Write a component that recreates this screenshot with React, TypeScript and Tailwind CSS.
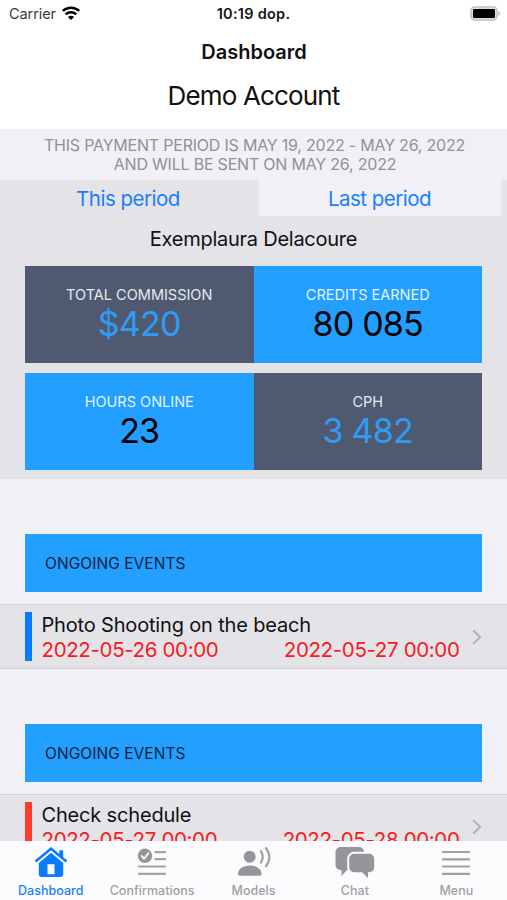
import type { ReactNode } from "react";

function StatusBar() {
  return (
    <div className="grid h-7 grid-cols-3 items-center pr-[6px] pl-[9px]">
      <div className="flex items-center gap-[6px]">
        <span className="text-[14.5px] leading-7 tracking-[-0.08px] text-[#3a3a3a]">Carrier</span>
        <svg width="18" height="14" viewBox="0 0 18 14" className="-mt-[3px]" fill="none" stroke="#000" strokeWidth="2.4">
          <path d="M.8 5C5.3.7 12.7.7 17.2 5" />
          <path d="M3.7 8.3c3-2.7 7.6-2.7 10.6 0" />
          <path d="M9 14 5.9 10.9c1.7-1.5 4.5-1.5 6.2 0z" fill="#000" stroke="none" />
        </svg>
      </div>
      <span className="-ml-[3px] text-center text-[14.5px] leading-7 font-semibold tracking-[0.28px] whitespace-nowrap text-[#151515]">10:19 dop.</span>
      <svg width="31" height="15" viewBox="0 0 31 15" className="-mt-[2px] justify-self-end">
        <rect x="0.9" y="0.9" width="26.2" height="13.2" rx="4" fill="#dcdcdc" stroke="#bdbdbd" strokeWidth="1.3" />
        <rect x="3" y="3" width="22" height="9" rx="1.2" fill="#000" />
        <path d="M28.5 5.2c2.2.8 2.2 3.8 0 4.6z" fill="#b9b9b9" />
      </svg>
    </div>
  );
}

function Tile({ label, value, dark = false }: { label: string; value: string; dark?: boolean }) {
  return (
    <div className={`flex flex-1 flex-col items-center pt-[19px] ${dark ? "bg-[#4f5a71]" : "bg-[#239fff]"}`}>
      <span className={`text-[14.5px] leading-5 ${dark ? "text-[#e6e9ee]" : "text-[#e2f4ff]"}`}>{label}</span>
      <span className={`-mt-px text-[34px] leading-10 tracking-[-0.8px] ${dark ? "text-[#2f9cf4]" : "text-black"}`}>{value}</span>
    </div>
  );
}

function EventGroup({ title, from, to, stripe }: { title: string; from: string; to: string; stripe: string }) {
  return (
    <section>
      <h2 className="mx-[25px] flex h-[58px] items-center bg-[#239fff] pt-px pl-5 text-[15.5px] tracking-[0.06px] text-[#08233c]">
        ONGOING EVENTS
      </h2>
      <div className="mt-3 flex h-[65px] items-center border-y border-[#d2d1d6] bg-[#e4e3e8] pr-6 pl-[25px]">
        <div className={`h-[49px] w-[7px] ${stripe}`} />
        <div className="ml-[9.5px] w-[418px] pt-px">
          <div className="text-[20px] leading-[25px] tracking-[-0.17px] whitespace-nowrap text-[#111113]">{title}</div>
          <div className="flex justify-between text-[20.5px] leading-[23px] tracking-[-0.36px] whitespace-nowrap text-[#f51c20]">
            <span>{from}</span>
            <span>{to}</span>
          </div>
        </div>
        <svg width="10" height="16" viewBox="0 0 10 16" className="ml-3 shrink-0" fill="none" stroke="#b5b4b9" strokeWidth="2.2">
          <path d="m1.2 1.2 6.8 6.8-6.8 6.8" />
        </svg>
      </div>
    </section>
  );
}

function HomeIcon() {
  return (
    <svg width="34" height="30" viewBox="0 0 34 30" fill="#087bff">
      <path d="M1.5 14.5 17 1.7l15.5 12.8" fill="none" stroke="#087bff" strokeWidth="2.5" />
      <path d="M25.3 3.3h3.8v8.5l-3.8-3.2z" />
      <path fillRule="evenodd" d="M17 5.7 29.2 16v11a3 3 0 0 1-3 3H7.8a3 3 0 0 1-3-3V16zM13.5 17.2v10h7v-10z" />
    </svg>
  );
}

function ChecklistIcon() {
  return (
    <svg width="30" height="30" viewBox="0 0 30 30" fill="none" strokeLinecap="round">
      <circle cx="8" cy="8.8" r="7.2" fill="#969599" />
      <path d="m4.7 9 2.4 2.7 4.3-5.5" stroke="#fff" strokeWidth="1.8" />
      <path d="M18.5 5.2H28M18.5 12.2H28M2 19.5h26M2 26.8h26" stroke="#a3a2a5" strokeWidth="2.2" />
    </svg>
  );
}

function SpeakerIcon() {
  return (
    <svg width="34" height="30" viewBox="0 0 34 30" fill="#969599">
      <circle cx="12.7" cy="9.8" r="6" />
      <path d="M1 27c0-4.5 4.5-8.5 11.7-8.5S24.5 22.5 24.5 27c0 1.2-.5 1.7-1.7 1.7H2.7C1.5 28.7 1 28.2 1 27z" />
      <path d="M24 4.3c2.2 3.6 2.2 7.6 0 11.2M29 1.2c4.3 5.6 4.3 12.4 0 18" fill="none" stroke="#a3a2a5" strokeWidth="2.3" strokeLinecap="round" />
    </svg>
  );
}

function ChatIcon() {
  return (
    <svg width="40" height="32" viewBox="0 0 40 32" fill="#969599">
      <path d="M5.5 0H24a5 5 0 0 1 5 5v13a5 5 0 0 1-5 5H12l-5.5 6v-6h-1a5 5 0 0 1-5-5V5a5 5 0 0 1 5-5z" />
      <path d="M19.2 6.7h15a5 5 0 0 1 5 5v8.5a5 5 0 0 1-5 5H33V31l-6-5.8h-7.8a5 5 0 0 1-5-5v-8.5a5 5 0 0 1 5-5z" stroke="#fcfbfd" strokeWidth="4" paintOrder="stroke" />
    </svg>
  );
}

function MenuIcon() {
  return (
    <svg width="30" height="30" viewBox="0 0 30 30" fill="none" stroke="#a09fa2" strokeWidth="2.2" strokeLinecap="round">
      <path d="M2 5h26M2 12.3h26M2 19.5h26M2 26.8h26" />
    </svg>
  );
}

function Tab({ icon, label, active = false }: { icon: ReactNode; label: string; active?: boolean }) {
  return (
    <div className={`flex flex-1 flex-col items-center pt-[6px] ${active ? "text-[#1a80fb]" : "text-[#a09fa3]"}`}>
      <div className="flex h-[34px] shrink-0 items-start justify-center">{icon}</div>
      <span className="h-[19px] text-[12.5px] leading-5 font-medium tracking-[0.02px]">{label}</span>
    </div>
  );
}

export default function App() {
  return (
    <div className="flex h-[900px] w-[507px] flex-col overflow-hidden bg-[#f1f0f6] font-['Inter','Liberation_Sans',sans-serif]">
      <header className="h-[128.5px] shrink-0 bg-white text-center text-[#111]">
        <StatusBar />
        <h1 className="h-12 pl-px text-[20px] leading-12 font-semibold">Dashboard</h1>
        <div className="h-10 text-[26px] leading-10 tracking-[-0.85px]">Demo Account</div>
      </header>
      <main className="min-h-0 flex-1 overflow-hidden">
        <div className="h-[51.5px] pt-[7px] pl-[2px] text-center text-[16px] leading-[19px] tracking-[-0.21px] text-[#929196]">
          <p>THIS PAYMENT PERIOD IS MAY 19, 2022 - MAY 26, 2022</p>
          <p className="pl-px">AND WILL BE SENT ON MAY 26, 2022</p>
        </div>
        <section className="h-[298.5px] bg-[#e4e3e8]">
          <div className="flex h-9 pr-[6px] text-center text-[20.5px] leading-[37px] tracking-[-0.5px] text-[#1a80f5]">
            <div className="w-[259px] pr-[3px]">This period</div>
            <div className="flex-1 bg-[#f1f0f6] pr-px">Last period</div>
          </div>
          <div className="h-[50px] text-center text-[20px] leading-[46px] tracking-[-0.25px] text-[#111113]">Exemplaura Delacoure</div>
          <div className="mx-[25px] flex flex-col gap-[10px]">
            <div className="flex h-[97px]">
              <Tile dark label="TOTAL COMMISSION" value="$420" />
              <Tile label="CREDITS EARNED" value="80 085" />
            </div>
            <div className="flex h-[97px]">
              <Tile label="HOURS ONLINE" value="23" />
              <Tile dark label="CPH" value="3 482" />
            </div>
          </div>
        </section>
        <div className="flex flex-col gap-[55px] pt-[55.5px]">
          <EventGroup title="Photo Shooting on the beach" from="2022-05-26 00:00" to="2022-05-27 00:00" stripe="bg-[#087bff]" />
          <EventGroup title="Check schedule" from="2022-05-27 00:00" to="2022-05-28 00:00" stripe="bg-[#ff3b30]" />
        </div>
      </main>
      <nav className="flex h-[59.5px] shrink-0 bg-[#fcfbfd]">
        <Tab active icon={<HomeIcon />} label="Dashboard" />
        <Tab icon={<ChecklistIcon />} label="Confirmations" />
        <Tab icon={<SpeakerIcon />} label="Models" />
        <Tab icon={<ChatIcon />} label="Chat" />
        <Tab icon={<MenuIcon />} label="Menu" />
      </nav>
    </div>
  );
}
